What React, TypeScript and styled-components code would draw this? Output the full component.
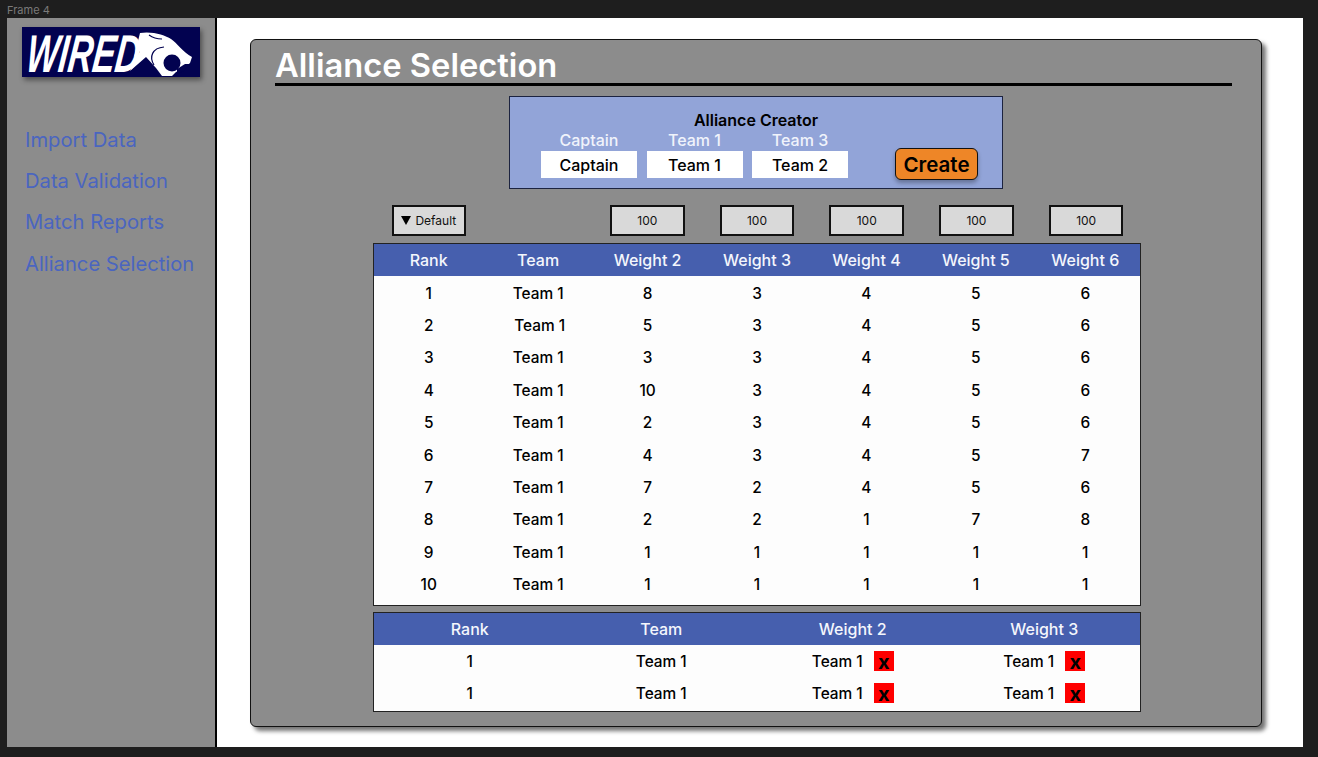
import styled, { createGlobalStyle } from "styled-components";

const GlobalStyle = createGlobalStyle`
  html, body {
    margin: 0;
    padding: 0;
    background: #1e1e1e;
  }
  body {
    font-family: "Inter", "Liberation Sans", sans-serif;
  }
`;

const Canvas = styled.div`
  width: 1318px;
  height: 757px;
  box-sizing: border-box;
  padding: 3px 15px 10px 7px;
  display: flex;
  flex-direction: column;
  overflow: hidden;
`;
const FrameLabel = styled.div`
  height: 15px;
  line-height: 14px;
  font-size: 11px;
  color: #7a7a7a;
`;
const Frame = styled.div`
  flex: 1;
  display: flex;
  min-height: 0;
  background: #fff;
`;
const Sidebar = styled.aside`
  width: 208px;
  box-sizing: content-box;
  border-right: 2px solid #000;
  background: #8c8c8c;
  padding: 9px 0 0;
`;
const LogoBox = styled.div`
  width: 178px;
  height: 50px;
  margin-left: 15px;
  box-shadow: 2px 3px 5px rgba(0, 0, 0, 0.45);
  svg {
    display: block;
    overflow: visible;
  }
`;
const Nav = styled.nav`
  margin-top: 49.7px;
  padding-left: 18px;
  display: flex;
  flex-direction: column;
  gap: 15.4px;
`;
const NavLink = styled.a`
  font-size: 20.2px;
  line-height: 26px;
  font-weight: 400;
  color: #4a65c0;
`;
const Content = styled.main`
  flex: 1;
  padding: 21px 41px 20px 33px;
  display: flex;
`;
const Panel = styled.section`
  flex: 1;
  box-sizing: border-box;
  background: #8c8c8c;
  border: 1px solid #111;
  border-radius: 6px;
  box-shadow: 4px 4px 4px rgba(0, 0, 0, 0.55);
  padding: 4px 24px 0;
  display: flex;
  flex-direction: column;
  align-items: center;
`;
const Title = styled.h1`
  align-self: stretch;
  margin: 0 5px 0 0;
  height: 39px;
  line-height: 43px;
  border-bottom: 3px solid #000;
  font-size: 32.7px;
  font-weight: 600;
  color: #fff;
`;
const Creator = styled.div`
  box-sizing: border-box;
  width: 494px;
  height: 93px;
  margin-top: 10px;
  background: #92a4d8;
  border: 1px solid #1c2340;
  display: flex;
  flex-direction: column;
  align-items: center;
  padding-top: 13px;
  position: relative;
`;
const CreatorTitle = styled.div`
  font-size: 16px;
  line-height: 20px;
  font-weight: 600;
  color: #000;
`;
const Fields = styled.div`
  align-self: flex-start;
  margin-left: 31px;
  display: flex;
  gap: 9.5px;
`;
const Field = styled.div`
  width: 96px;
  display: flex;
  flex-direction: column;
  align-items: center;
`;
const FieldLabel = styled.div`
  font-size: 16px;
  line-height: 20px;
  font-weight: 500;
  color: #f0f3fb;
`;
const FieldInput = styled.div`
  width: 100%;
  height: 27px;
  margin-top: 1px;
  line-height: 28px;
  background: #fff;
  text-align: center;
  font-size: 16px;
  font-weight: 500;
  color: #000;
`;
const CreateButton = styled.button`
  position: absolute;
  left: 385px;
  top: 51px;
  width: 83px;
  height: 32px;
  box-sizing: border-box;
  padding: 0;
  background: #ee8627;
  border: 1px solid #111;
  border-radius: 6px;
  box-shadow: 0 3px 4px rgba(0, 0, 0, 0.3);
  font-family: inherit;
  font-size: 20.5px;
  font-weight: 600;
  color: #000;
`;
const FilterRow = styled.div`
  width: 768px;
  margin: 16px 0 0 2px;
  display: grid;
  grid-template-columns: repeat(7, 1fr);
  justify-items: center;
`;
const FilterBox = styled.div<{ $blank?: boolean }>`
  box-sizing: border-box;
  width: 74.5px;
  height: 31px;
  visibility: ${(props) => (props.$blank ? "hidden" : "visible")};
  background: #d9d9d9;
  border: 2px solid #111;
  display: flex;
  align-items: center;
  justify-content: center;
  gap: 4px;
  font-size: 12px;
  color: #111;
`;
const SortBox = styled(FilterBox)`
  margin-left: 2px;
`;
const Caret = styled.span`
  width: 0;
  height: 0;
  border-left: 5.5px solid transparent;
  border-right: 5.5px solid transparent;
  border-top: 9px solid #000;
`;
const Table = styled.div<{ $bottom: number; $top: number }>`
  box-sizing: border-box;
  width: 768px;
  margin: ${(props) => props.$top}px 0 0 2px;
  background: #fdfdfd;
  border: 1px solid #222;
  padding-bottom: ${(props) => props.$bottom}px;
`;
const HeadRow = styled.div<{ $cols: number; $gap?: number }>`
  display: grid;
  grid-template-columns: repeat(${(props) => props.$cols}, 1fr);
  height: 32px;
  margin-bottom: ${(props) => props.$gap ?? 0}px;
  align-items: center;
  background: #465fae;
  text-align: center;
  font-size: 16px;
  font-weight: 500;
  color: #f4f6fc;
`;
const Row = styled.div<{ $cols: number }>`
  display: grid;
  grid-template-columns: repeat(${(props) => props.$cols}, 1fr);
  height: 32.4px;
  align-items: center;
  text-align: center;
  font-size: 15.4px;
  font-weight: 550;
  color: #000;
`;
const Cell = styled.div<{ $nudge?: boolean }>`
  padding-left: ${(props) => (props.$nudge ? 3 : 0)}px;
`;
const PickCell = styled.div`
  display: flex;
  justify-content: center;
  align-items: center;
  gap: 11px;
`;
const RemoveButton = styled.span`
  width: 20px;
  height: 20px;
  background: #ff0000;
  color: #000;
  font-size: 20px;
  line-height: 23px;
  font-weight: 700;
  text-align: center;
`;

const rows: (string | number)[][] = [
  [1, "Team 1", 8, 3, 4, 5, 6],
  [2, "Team 1", 5, 3, 4, 5, 6],
  [3, "Team 1", 3, 3, 4, 5, 6],
  [4, "Team 1", 10, 3, 4, 5, 6],
  [5, "Team 1", 2, 3, 4, 5, 6],
  [6, "Team 1", 4, 3, 4, 5, 7],
  [7, "Team 1", 7, 2, 4, 5, 6],
  [8, "Team 1", 2, 2, 1, 7, 8],
  [9, "Team 1", 1, 1, 1, 1, 1],
  [10, "Team 1", 1, 1, 1, 1, 1],
];

function Logo() {
  return (
    <svg width="178" height="50" viewBox="0 0 178 50">
      <rect width="178" height="50" fill="#020250" />
      <text
        transform="translate(3 45) skewX(-7) scale(0.64 1)"
        fontFamily="Liberation Sans"
        fontStyle="italic"
        fontWeight="700"
        fontSize="53"
        fill="#fff"
      >
        WIRED
      </text>
      {/* panther head */}
      <path
        fill="#fff"
        d="M118 6 C130 4 143 8 149 12 C155 16 161 25 170 30 L168 36 L161 42 L154 45 L150 49 L140 49 L134 41 L124 30 L108 44 L118 24 L112 30 Z"
      />
      <circle cx="150" cy="36" r="8.5" fill="#020250" />
      <path fill="#020250" d="M155 42 L163 37 L168 37 L162 44 L155 47 Z" />
      <path
        fill="none"
        stroke="#020250"
        strokeWidth="1.2"
        d="M132 38 C127 30 130 21 142 20 M127 8 C131 11 135 12 140 12"
      />
    </svg>
  );
}

export default function App() {
  return (
    <Canvas>
      <GlobalStyle />
      <FrameLabel>Frame 4</FrameLabel>
      <Frame>
        <Sidebar>
          <LogoBox>
            <Logo />
          </LogoBox>
          <Nav>
            <NavLink>Import Data</NavLink>
            <NavLink>Data Validation</NavLink>
            <NavLink>Match Reports</NavLink>
            <NavLink>Alliance Selection</NavLink>
          </Nav>
        </Sidebar>
        <Content>
          <Panel>
            <Title>Alliance Selection</Title>
            <Creator>
              <CreatorTitle>Alliance Creator</CreatorTitle>
              <Fields>
                <Field>
                  <FieldLabel>Captain</FieldLabel>
                  <FieldInput>Captain</FieldInput>
                </Field>
                <Field>
                  <FieldLabel>Team 1</FieldLabel>
                  <FieldInput>Team 1</FieldInput>
                </Field>
                <Field>
                  <FieldLabel>Team 3</FieldLabel>
                  <FieldInput>Team 2</FieldInput>
                </Field>
              </Fields>
              <CreateButton>Create</CreateButton>
            </Creator>
            <FilterRow>
              <SortBox>
                <Caret />
                Default
              </SortBox>
              <FilterBox $blank />
              <FilterBox>100</FilterBox>
              <FilterBox>100</FilterBox>
              <FilterBox>100</FilterBox>
              <FilterBox>100</FilterBox>
              <FilterBox>100</FilterBox>
            </FilterRow>
            <Table $top={7} $bottom={4}>
              <HeadRow $cols={7} $gap={1}>
                <div>Rank</div>
                <div>Team</div>
                <div>Weight 2</div>
                <div>Weight 3</div>
                <div>Weight 4</div>
                <div>Weight 5</div>
                <div>Weight 6</div>
              </HeadRow>
              {rows.map((row, i) => (
                <Row $cols={7} key={i}>
                  {row.map((cell, j) => (
                    <Cell $nudge={i === 1 && j === 1} key={j}>
                      {cell}
                    </Cell>
                  ))}
                </Row>
              ))}
            </Table>
            <Table $top={6} $bottom={1}>
              <HeadRow $cols={4}>
                <div>Rank</div>
                <div>Team</div>
                <div>Weight 2</div>
                <div>Weight 3</div>
              </HeadRow>
              {[0, 1].map((i) => (
                <Row $cols={4} key={i}>
                  <div>1</div>
                  <div>Team 1</div>
                  <PickCell>
                    Team 1<RemoveButton>x</RemoveButton>
                  </PickCell>
                  <PickCell>
                    Team 1<RemoveButton>x</RemoveButton>
                  </PickCell>
                </Row>
              ))}
            </Table>
          </Panel>
        </Content>
      </Frame>
    </Canvas>
  );
}
